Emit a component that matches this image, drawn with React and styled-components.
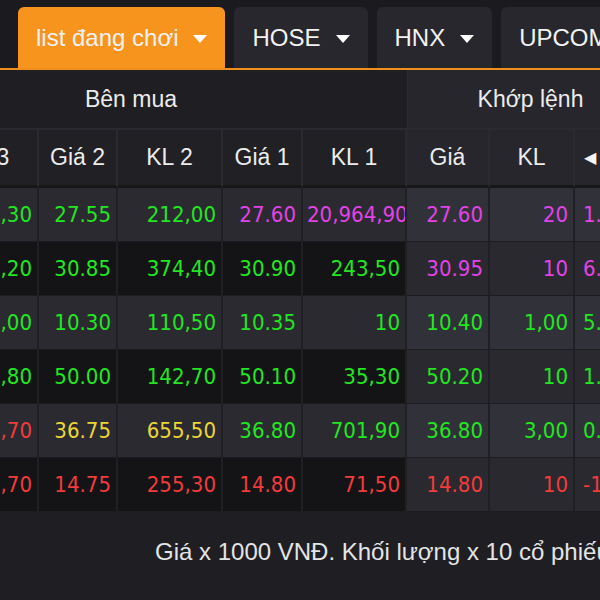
import React, {useLayoutEffect, useRef} from 'react';
import styled, {createGlobalStyle} from 'styled-components';

const GlobalStyle = createGlobalStyle`
    body {
        margin: 0;
        background: #1e1e23;
        font-family: "Liberation Sans", Arial, sans-serif;
    }
`;

const tabs = [
    {label: 'list đang chơi', active: true},
    {label: 'HOSE'},
    {label: 'HNX'},
    {label: 'UPCOM'},
];

const columns = ['Giá 3', 'KL 3', 'Giá 2', 'KL 2', 'Giá 1', 'KL 1', 'Giá', 'KL'];

const G = '#22e622';
const P = '#e243e6';
const R = '#f23b3b';
const Y = '#ecd636';

// each row: [text, colour] per column
const rows = [
    [['27.50', G], ['115,30', G], ['27.55', G], ['212,00', G], ['27.60', P], ['20,964,90', P], ['27.60', P], ['20', P], ['1.80', P]],
    [['30.80', G], ['96,20', G], ['30.85', G], ['374,40', G], ['30.90', G], ['243,50', G], ['30.95', P], ['10', P], ['6.00', P]],
    [['10.25', G], ['210,00', G], ['10.30', G], ['110,50', G], ['10.35', G], ['10', G], ['10.40', G], ['1,00', G], ['5.00', G]],
    [['49.95', G], ['88,80', G], ['50.00', G], ['142,70', G], ['50.10', G], ['35,30', G], ['50.20', G], ['10', G], ['1.10', G]],
    [['36.70', R], ['302,70', R], ['36.75', Y], ['655,50', Y], ['36.80', G], ['701,90', G], ['36.80', G], ['3,00', G], ['0.05', G]],
    [['14.70', R], ['423,70', R], ['14.75', R], ['255,30', R], ['14.80', R], ['71,50', R], ['14.80', R], ['10', R], ['-1.20', R]],
];

const App = () => {
    const board = useRef(null);

    useLayoutEffect(() => {
        if (board.current) board.current.scrollLeft = 145;
    }, []);

    return(
        <Page>
            <GlobalStyle/>
            <TabBar>
                {tabs.map(t => (
                    <Tab key={t.label} $active={t.active}>
                        {t.label}
                        <Caret/>
                    </Tab>
                ))}
            </TabBar>
            <Board ref={board}>
                <Grid>
                    <GroupHead $span={6}>Bên mua</GroupHead>
                    <GroupHead $span={3} $match>Khớp lệnh</GroupHead>
                    {columns.map((c, i) => (
                        <ColHead key={c} $match={i >= 6}>{c}</ColHead>
                    ))}
                    <ColHead $match $last><Arrow>◀</Arrow>+/-</ColHead>
                    {rows.map((row, r) => row.map(([text, color], i) => (
                        <Cell key={r + '-' + i} $odd={r % 2 === 0} $match={i >= 6} $last={i === 8} $color={color}>
                            {text}
                        </Cell>
                    )))}
                </Grid>
            </Board>
            <Note>Giá x 1000 VNĐ. Khối lượng x 10 cổ phiếu</Note>
        </Page>
    );
};

const Page = styled.div`
    width: 600px;
    height: 600px;
    overflow: hidden;
    background: #1e1e23;
`;

const TabBar = styled.div`
    display: flex;
    gap: 9px;
    padding: 7px 0 0 18px;
    background: #1a1a1f;
    border-bottom: 2px solid #f0901c;
    white-space: nowrap;
`;

const Tab = styled.div`
    display: flex;
    align-items: center;
    gap: 15px;
    flex-shrink: 0;
    height: 61px;
    padding: 0 18px;
    border-radius: 6px 6px 0 0;
    font-size: 24px;
    color: #f2f2f2;
    background: ${p => p.$active ? '#f7941d' : '#27272d'};
`;

const Caret = styled.span`
    width: 0;
    height: 0;
    border-left: 7px solid transparent;
    border-right: 7px solid transparent;
    border-top: 8px solid #ffffff;
    margin-top: 2px;
`;

const Board = styled.div`
    overflow-x: auto;
    scrollbar-width: none;
    &::-webkit-scrollbar {
        display: none;
    }
`;

const Grid = styled.div`
    display: grid;
    grid-template-columns: 80px 104px 79px 105px 80px 104px 83px 85px 78px;
    grid-template-rows: 60px 58px repeat(6, 54px);
    width: max-content;
`;

const GroupHead = styled.div`
    grid-column: span ${p => p.$span};
    display: flex;
    align-items: center;
    justify-content: center;
    font-size: 23px;
    color: #ececec;
    background: ${p => p.$match ? '#26262c' : '#1e1e23'};
    border-bottom: 2px solid #2a2a30;
    border-left: ${p => p.$match ? '1px solid #2c2c33' : 'none'};
`;

const ColHead = styled.div`
    display: flex;
    align-items: center;
    gap: 8px;
    justify-content: ${p => p.$last ? 'flex-start' : 'center'};
    padding-left: ${p => p.$last ? '9px' : '0'};
    font-size: 23px;
    color: #ececec;
    background: ${p => p.$match ? '#26262c' : '#202025'};
    border-right: 2px solid #2a2a30;
    border-bottom: 3px solid #17171a;
    white-space: nowrap;
    overflow: hidden;
`;

const Arrow = styled.span`
    font-size: 16px;
    color: #f4f4f4;
`;

const Cell = styled.div`
    line-height: 53px;
    text-align: ${p => p.$last ? 'left' : 'right'};
    padding: ${p => p.$last ? '0 0 0 8px' : '0 5px 0 4px'};
    overflow: hidden;
    white-space: nowrap;
    font-family: "DejaVu Sans Condensed", "DejaVu Sans", sans-serif;
    font-size: 22px;
    color: ${p => p.$color};
    background: ${p => p.$match
        ? (p.$odd ? '#31313a' : '#29292f')
        : (p.$odd ? '#2a2a30' : '#141417')};
    border-right: 2px solid #1f1f24;
    border-bottom: 1px solid #1d1d21;
`;

const Note = styled.div`
    display: flex;
    align-items: center;
    height: 80px;
    padding-left: 155px;
    font-size: 24px;
    color: #e4e4e4;
    white-space: nowrap;
`;

export default App;
